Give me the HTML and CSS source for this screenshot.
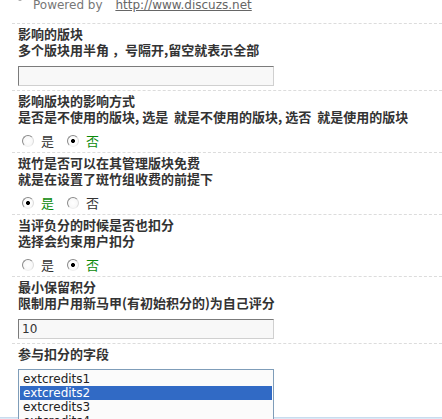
FILE: index.html
```html
<!DOCTYPE html>
<html lang="zh-CN">
<head>
<meta charset="utf-8">
<title>设置</title>
<link rel="stylesheet" href="styles.css">
</head>
<body>
<div class="page">
  <div class="credit">
    <span class="credit-line"><span class="dot"></span>Powered by <a class="credit-link" href="#">http://www.discuzs.net</a></span>
  </div>

  <div class="row row-input">
    <div class="label">影响的版块</div>
    <div class="label">多个版块用半角 ，号隔开,留空就表示全部</div>
    <input class="text" type="text" value="">
  </div>

  <div class="row row-radio">
    <div class="label">影响版块的影响方式</div>
    <div class="label">是否是不使用的版块, 选是&nbsp;&nbsp;就是不使用的版块, 选否&nbsp;&nbsp;就是使用的版块</div>
    <div class="radios">
      <label class="opt"><input class="radio" type="radio" name="r1"><span>是</span></label>
      <label class="opt checked"><input class="radio" type="radio" name="r1" checked><span>否</span></label>
    </div>
  </div>

  <div class="row row-radio">
    <div class="label">斑竹是否可以在其管理版块免费</div>
    <div class="label">就是在设置了斑竹组收费的前提下</div>
    <div class="radios">
      <label class="opt checked"><input class="radio" type="radio" name="r2" checked><span>是</span></label>
      <label class="opt"><input class="radio" type="radio" name="r2"><span>否</span></label>
    </div>
  </div>

  <div class="row row-radio">
    <div class="label">当评负分的时候是否也扣分</div>
    <div class="label">选择会约束用户扣分</div>
    <div class="radios">
      <label class="opt"><input class="radio" type="radio" name="r3"><span>是</span></label>
      <label class="opt checked"><input class="radio" type="radio" name="r3" checked><span>否</span></label>
    </div>
  </div>

  <div class="row row-input">
    <div class="label">最小保留积分</div>
    <div class="label">限制用户用新马甲(有初始积分的)为自己评分</div>
    <input class="text" type="text" value="10">
  </div>

  <div class="row row-list">
    <div class="label">参与扣分的字段</div>
    <div class="list-wrap">
      <div class="list" role="listbox" aria-multiselectable="true">
        <div class="item" role="option">extcredits1</div>
        <div class="item selected" role="option" aria-selected="true">extcredits2</div>
        <div class="item" role="option">extcredits3</div>
        <div class="item" role="option">extcredits4</div>
        <div class="item" role="option">extcredits5</div>
      </div>
    </div>
  </div>

  <div class="band"></div>
</div>
</body>
</html>
```

FILE: styles.css
```css
html, body {
  margin: 0;
  padding: 0;
  background: #ffffff;
}

body {
  width: 442px;
  height: 419px;
  overflow: hidden;
  font-family: "Noto Sans CJK SC", "DejaVu Sans", sans-serif;
  color: #333333;
}

.page {
  width: 442px;
}

.credit {
  height: 23px;
  padding-left: 18px;
  overflow: hidden;
}

.credit-line {
  display: block;
  margin-top: -3px;
  font-family: "DejaVu Sans", Verdana, sans-serif;
  font-size: 12px;
  line-height: 14px;
  color: #777777;
  white-space: nowrap;
}

.dot {
  display: inline-block;
  width: 4px;
  height: 4px;
  border-radius: 50%;
  background: #a8a8a8;
  margin-right: 11px;
  vertical-align: 8px;
}

.credit-link {
  color: #666666;
  text-decoration: underline;
  margin-left: 9px;
}

.row {
  margin-left: 12px;
  padding: 2px 0 4px 6px;
  border-top: 1px dashed #dcdcdc;
}

.label {
  font-size: 13px;
  line-height: 16px;
  font-weight: bold;
  color: #333333;
  white-space: nowrap;
}

.row-input .text {
  display: block;
  box-sizing: border-box;
  width: 256px;
  height: 20px;
  margin: 8px 0 0 0;
  padding: 0 3px;
  border: 1px solid;
  border-color: #7b7b7b #d0d0d0 #d0d0d0 #7b7b7b;
  background: #f8f8f8;
  font-family: "DejaVu Sans", Verdana, sans-serif;
  font-size: 12px;
  color: #333333;
  outline: none;
}

.row-radio {
  padding-bottom: 3px;
}

.radios {
  display: flex;
  align-items: center;
  height: 16px;
  margin-top: 8px;
  padding-left: 4px;
}

.opt {
  display: flex;
  align-items: center;
  font-size: 13px;
  line-height: 16px;
  color: #333333;
}

.opt + .opt {
  margin-left: 13px;
}

.opt span {
  margin-left: 7px;
}

.opt.checked {
  color: #0a8a0a;
}

.radio {
  appearance: none;
  -webkit-appearance: none;
  box-sizing: border-box;
  width: 12px;
  height: 12px;
  margin: 0;
  border-radius: 50%;
  border: 1px solid;
  border-color: #8a8a8a #dcdcdc #f0f0f0 #8a8a8a;
  background: radial-gradient(circle at 50% 50%, #ffffff 0, #f4f4f4 100%);
}

.radio:checked {
  background: radial-gradient(circle at 50% 50%, #000000 0, #000000 1.7px, #ffffff 2.3px, #f4f4f4 100%);
}

.row-list {
  padding-bottom: 0;
}

.list-wrap {
  height: 48px;
  margin-top: 7px;
}

.list {
  display: inline-block;
  vertical-align: top;
  box-sizing: border-box;
  width: 256px;
  height: 74px;
  padding: 2px 1px;
  border: 1px solid #7f9db9;
  background: #fbfbfb;
  overflow: hidden;
}

.item {
  height: 14px;
  padding-left: 3px;
  font-family: "DejaVu Sans", Tahoma, sans-serif;
  font-size: 12px;
  line-height: 14px;
  color: #222222;
  white-space: nowrap;
}

.item.selected {
  background: #316ac5;
  color: #ffffff;
}

.band {
  height: 3px;
  border-top: 1px solid #c9dcee;
  background: #dbe9f6;
}
```
